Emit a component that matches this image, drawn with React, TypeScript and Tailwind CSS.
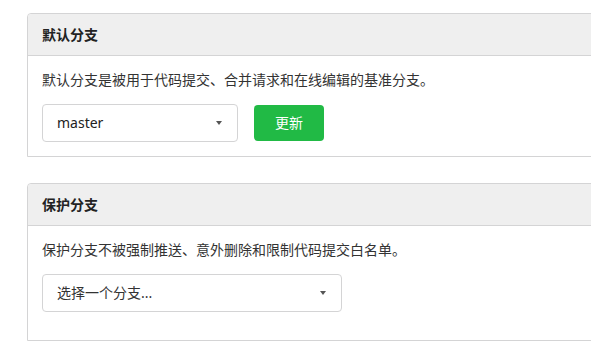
import React from 'react';

const font = { fontFamily: '"Noto Sans", "Noto Sans CJK SC", sans-serif' };

const Caret = () => (
  <span className="ml-auto h-0 w-0 border-x-[3.5px] border-t-[4px] border-x-transparent border-t-[#555]" />
);

const Select = ({ value, width, placeholder }: { value: string; width: string; placeholder?: boolean }) => (
  <div
    className={`flex h-[38px] ${width} items-center rounded-[4px] border border-[#d4d4d5] bg-white pl-[14px] pr-[15px] text-[14px] ${
      placeholder ? 'text-[#333]' : 'text-[#222]'
    }`}
  >
    <span>{value}</span>
    <Caret />
  </div>
);

const Section = ({ title, children }: { title: string; children: React.ReactNode }) => (
  <div className="w-[600px] rounded-t-[4px] border border-[#d4d4d5]">
    <div className="flex h-[42px] items-center rounded-t-[4px] border-b border-[#d4d4d5] bg-[#efefef] px-[14px] text-[14px] font-bold text-[#222]">
      {title}
    </div>
    <div className="bg-white p-[14px] text-[14px] leading-[20px] text-[#333]">{children}</div>
  </div>
);

export default function App() {
  return (
    <div className="h-[354px] w-[591px] overflow-hidden bg-white pl-[27px] pt-[13px]" style={font}>
      <div className="flex flex-col gap-[26px]">
        <Section title="默认分支">
          <p>默认分支是被用于代码提交、合并请求和在线编辑的基准分支。</p>
          <div className="mt-[14px] flex items-center gap-[16px]">
            <Select value="master" width="w-[196px]" />
            <button className="h-[36px] w-[70px] rounded-[4px] bg-[#21ba45] text-[14px] text-white">更新</button>
          </div>
        </Section>
        <Section title="保护分支">
          <p>保护分支不被强制推送、意外删除和限制代码提交白名单。</p>
          <div className="mb-[14px] mt-[14px]">
            <Select value="选择一个分支..." width="w-[300px]" placeholder />
          </div>
        </Section>
      </div>
    </div>
  );
}
